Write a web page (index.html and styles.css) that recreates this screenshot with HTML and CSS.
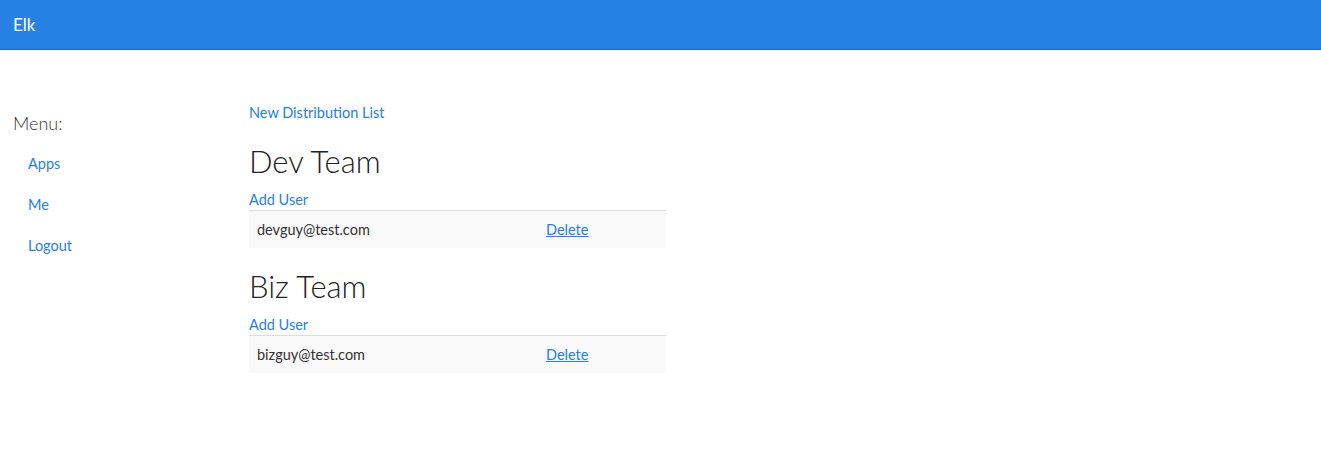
FILE: index.html
```html
<!DOCTYPE html>
<html lang="en">
<head>
<meta charset="utf-8">
<title>Elk</title>
<link rel="stylesheet" href="styles.css">
</head>
<body>
<header class="navbar">
  <a class="brand" href="#">Elk</a>
</header>
<div class="layout">
  <aside class="sidebar">
    <h4 class="menu-title">Menu:</h4>
    <nav class="menu">
      <a href="#">Apps</a>
      <a href="#">Me</a>
      <a href="#">Logout</a>
    </nav>
  </aside>
  <main class="main">
    <a class="new-list" href="#">New Distribution List</a>
    <section class="dlist">
      <h2>Dev Team</h2>
      <a class="add-user" href="#">Add User</a>
      <table class="users">
        <tr><td class="email">devguy@test.com</td><td class="action"><a href="#">Delete</a></td></tr>
      </table>
    </section>
    <section class="dlist">
      <h2>Biz Team</h2>
      <a class="add-user" href="#">Add User</a>
      <table class="users">
        <tr><td class="email">bizguy@test.com</td><td class="action"><a href="#">Delete</a></td></tr>
      </table>
    </section>
  </main>
</div>
</body>
</html>
```
FILE: styles.css
```css
* { box-sizing: border-box; }
html, body { margin: 0; padding: 0; }
body {
  font-family: "Lato", "Open Sans", "Liberation Sans", sans-serif;
  font-size: 14.5px;
  line-height: 21px;
  color: #333;
  background: #fff;
}
a { color: #2780e3; text-decoration: none; }

.navbar {
  height: 50px;
  background: #2780e3;
  border-bottom: 1px solid #1967be;
  display: flex;
  align-items: center;
  padding: 0 13px;
}
.brand {
  color: #fff;
  font-size: 17px;
  line-height: 20px;
}

.layout {
  display: flex;
  padding: 0 12px;
}
.sidebar {
  width: 237px;
  flex: none;
  padding-top: 61px;
}
.menu-title {
  margin: 0 0 8px 1px;
  font-size: 18px;
  font-weight: 300;
  line-height: 24px;
  color: #333;
}
.menu {
  display: flex;
  flex-direction: column;
}
.menu a {
  padding: 10px 16px;
  line-height: 21px;
}

.main {
  padding-top: 52px;
  width: 417px;
}
.new-list {
  display: block;
}
.dlist h2 {
  margin: 21px 0 11px;
  font-size: 31px;
  font-weight: 300;
  line-height: 34px;
  color: #222;
}
.add-user { display: block; }
.users {
  width: 100%;
  border-collapse: collapse;
  border-top: 1px solid #ddd;
}
.users td {
  padding: 8px;
  background: #f9f9f9;
  line-height: 21px;
}
.users .email { width: 289px; }
.users .action a { text-decoration: underline; }
```
